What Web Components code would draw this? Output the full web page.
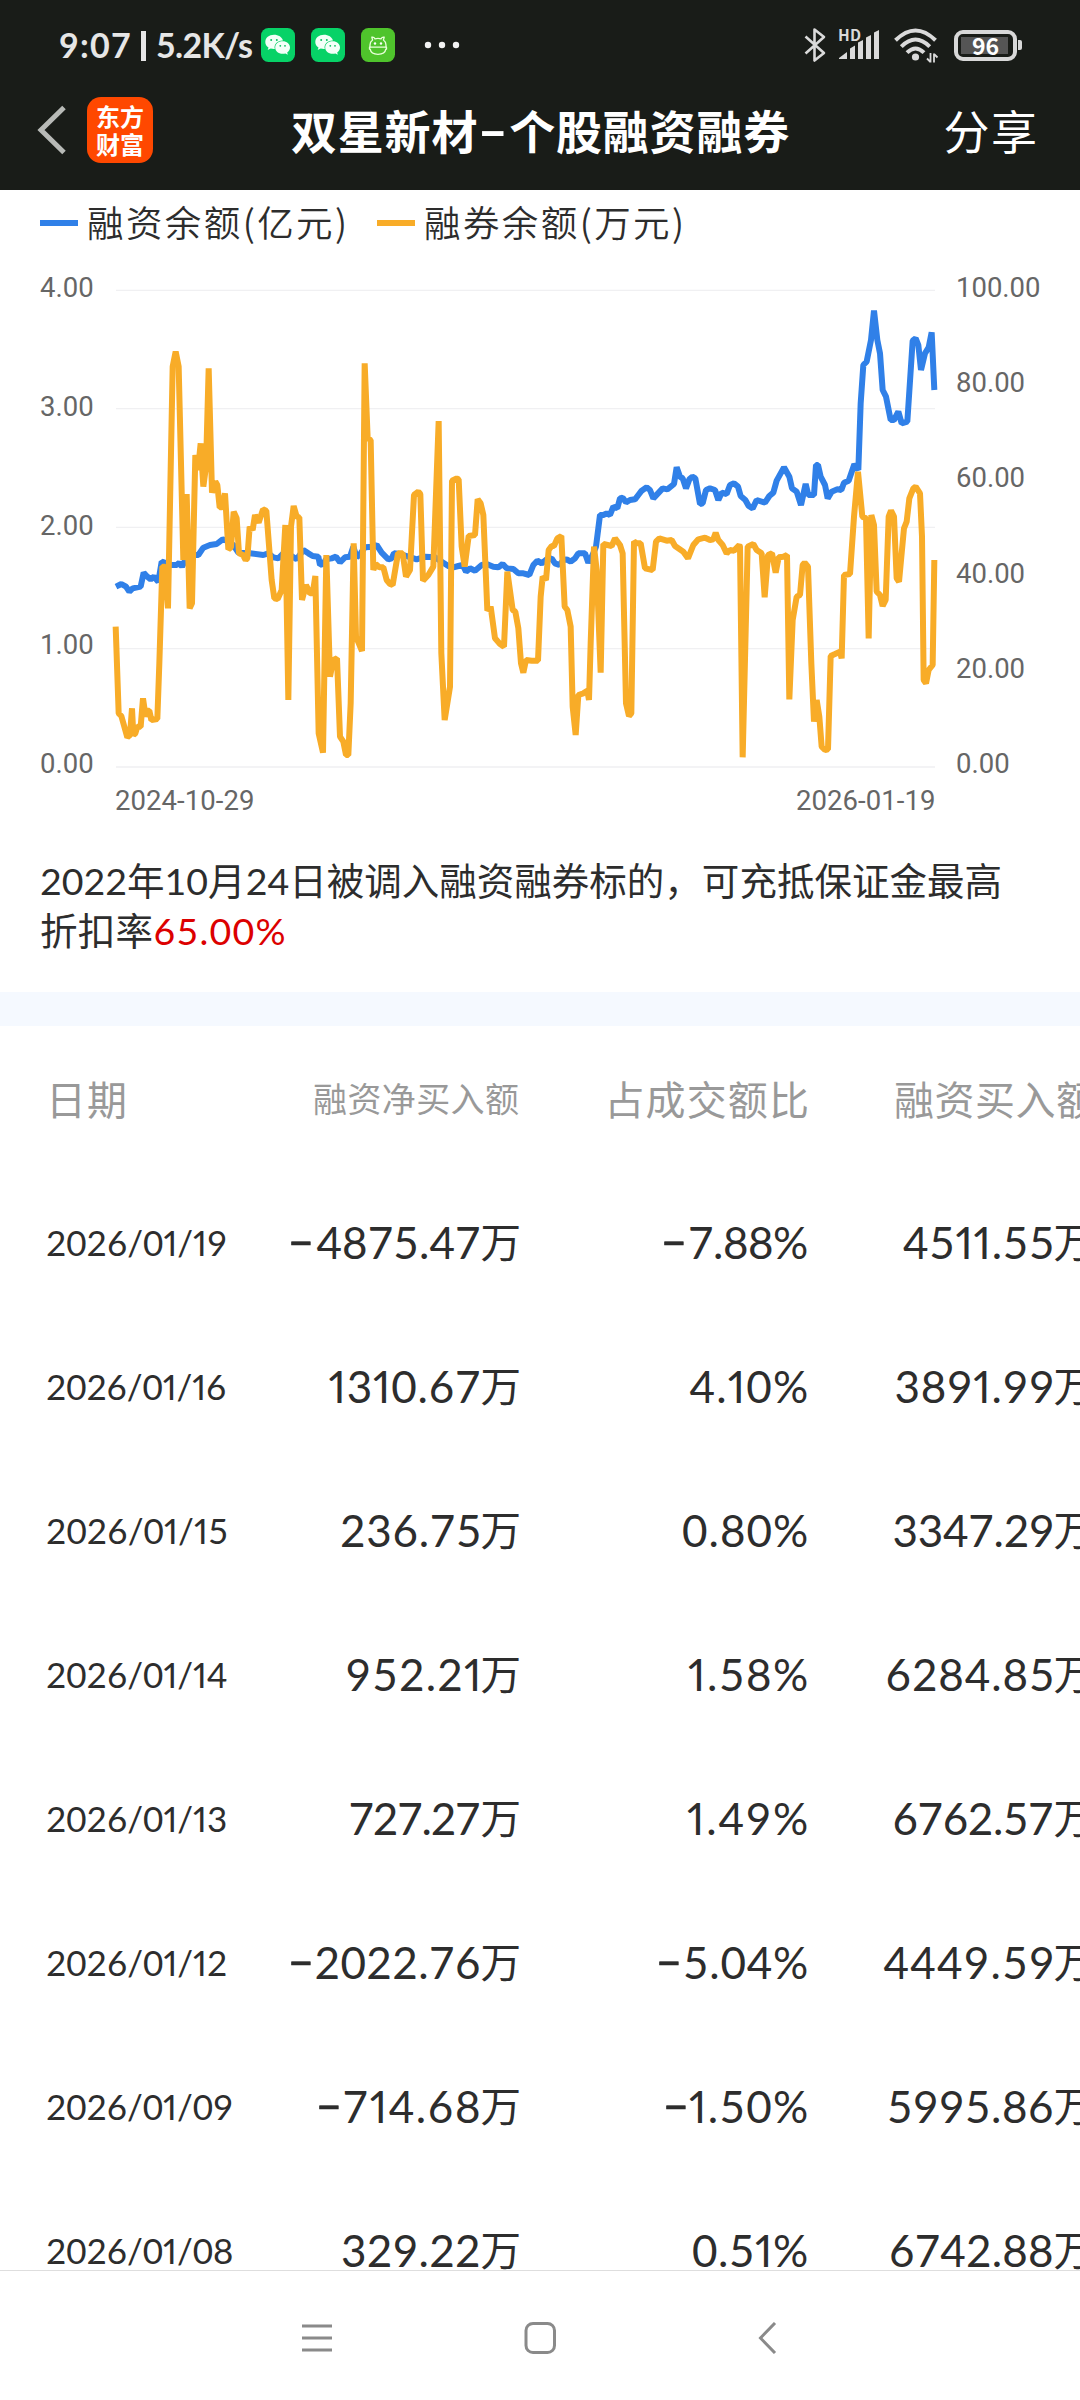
<!DOCTYPE html>
<html lang="zh-CN">
<head>
    <meta charset="UTF-8">
    <meta name="viewport" content="width=device-width, initial-scale=1.0">
    <title>双星新材-个股融资融券</title>
    <style>
        html, body{
            margin: 0;
            background: #fff;
        }
        body{
            font-family: Lato, "Noto Sans CJK SC", sans-serif;
            color: #2d2d2d;
            overflow: hidden;
        }
    </style>
</head>
<body>
    <margin-page></margin-page>

    <template id="tpl-page">
        <style>
            :host{
                display: flex;
                flex-direction: column;
                width: 1080px;
                height: 2400px;
                overflow: hidden;
            }
            header{
                height: 190px;
                background: #191c18;
                flex: none;
            }
            main{
                flex: 1;
                min-height: 0;
                overflow: hidden;
            }
            .band{
                height: 34px;
                background: #f5f9ff;
            }
        </style>
        <header>
            <status-bar></status-bar>
            <title-bar>双星新材<span class="dash">-</span>个股融资融券</title-bar>
        </header>
        <main>
            <margin-chart></margin-chart>
            <stock-note></stock-note>
            <div class="band"></div>
            <margin-table></margin-table>
        </main>
        <nav-bar></nav-bar>
    </template>

    <template id="tpl-status">
        <style>
            :host{
                display: flex;
                align-items: center;
                height: 90px;
                padding: 0 63px 0 60px;
                box-sizing: border-box;
                color: #e6e6e6;
                font-size: 34px;
                font-weight: 700;
                line-height: 40px;
            }
            svg{ display: block; flex: none; overflow: visible; }
            .bar{
                width: 5px;
                height: 30px;
                margin: 2px 11px 0 11px;
                background: #e6e6e6;
            }
            .app{ margin-left: 16px; }
            .app.first{ margin-left: 9px; }
            .dots{ margin-left: 29px; }
            .space{ flex: 1; }
            .battery{
                position: relative;
                display: flex;
                align-items: center;
                justify-content: center;
                width: 63px;
                height: 31px;
                box-sizing: border-box;
                border: 4px solid #d8d8d8;
                border-radius: 9px;
                margin-left: 16px;
                font: 700 23px/30px "Noto Sans CJK SC", sans-serif;
                color: #fff;
            }
            .battery i{
                position: absolute;
                left: 3px;
                top: 3px;
                width: 47px;
                height: 17px;
                background: #555;
            }
            .battery b{
                position: absolute;
                right: -9px;
                top: 6px;
                width: 4px;
                height: 10px;
                border-radius: 0 2px 2px 0;
                background: #d8d8d8;
            }
            .battery span{ position: relative; }
            .signal text{ font: 700 15.5px "Noto Sans CJK SC", sans-serif; }
        </style>
        <fit-text w="70">9:07</fit-text>
        <div class="bar"></div>
        <fit-text w="95">5.2K/s</fit-text>
        <wechat-icon class="app first"></wechat-icon>
        <wechat-icon class="app"></wechat-icon>
        <svg class="app" width="34" height="34" viewBox="0 0 34 34">
            <rect width="34" height="34" rx="7.5" fill="#4fc42c"/>
            <g fill="none" stroke="#e9ffd9" stroke-width="1.3" stroke-linecap="round" stroke-linejoin="round">
                <path d="M9 19V17Q9.2 13.600 11.600 12L10.800 9.200Q12.800 8.600 14 10.900 17 10 20 10.900 21.200 8.600 23.200 9.200L22.400 12Q24.800 13.600 25 17V19"/>
                <path d="M8.500 19.200H25.500V21.200H24.800C23.800 28 10.200 28 9.200 21.200H8.500Z"/>
            </g>
            <circle cx="14" cy="15.500" r="1.200" fill="#fff"/>
            <circle cx="20" cy="15.500" r="1.200" fill="#fff"/>
        </svg>
        <svg class="dots" width="36" height="8" viewBox="0 0 36 8" fill="#f2f2f2">
            <circle cx="4" cy="4" r="3.2"/><circle cx="18" cy="4" r="3.2"/><circle cx="32" cy="4" r="3.2"/>
        </svg>
        <div class="space"></div>
        <svg width="22" height="36" viewBox="0 0 22 36" fill="none" stroke="#dadada" stroke-width="2.6" stroke-linejoin="round">
            <path d="M1.5 9.5 20 26 10.5 33.5V2.5L20 10 1.5 26.5"/>
        </svg>
        <svg class="signal" style="margin-left:12px" width="43" height="34" viewBox="0 0 43 34" fill="#dadada">
            <text x="0" y="12.5" textLength="23">HD</text>
            <path d="M1 31V30L9 24V31ZM12 31V20.500L17 17.500V31ZM20 31V14.500L25 12V31ZM28 31V9.500L33 7V31ZM36 31V4.500L41 2V31Z"/>
        </svg>
        <svg style="margin-left:13px" width="44" height="36" viewBox="0 0 44 36" fill="none" stroke="#dadada" stroke-width="4">
            <path d="M1.500 13.300Q21.500-6.300 41.500 13.300"/>
            <path d="M7.300 19.700Q21.500 5.500 35.700 19.700"/>
            <path d="M13 25.700Q21.500 17.300 30 25.700"/>
            <circle cx="21.500" cy="30" r="3.600" fill="#dadada" stroke="none"/>
            <path d="M36.500 26V35.500M36.500 35 33 31.500M40 35.500V26.500M40 27 43.500 30.500" stroke-width="1.800"/>
        </svg>
        <div class="battery"><i></i><b></b><span>96</span></div>
    </template>

    <template id="tpl-wechat">
        <style>
            :host{ display: block; flex: none; }
            svg{ display: block; }
        </style>
        <svg width="34" height="34" viewBox="0 0 34 34">
            <rect width="34" height="34" rx="7.500" fill="#07d267"/>
            <path fill="#f3fff8" d="M13 6.800c-5 0-8.700 3.100-8.700 7.100 0 2.300 1.200 4.200 3.200 5.500l-.8 2.700 3-1.600c1 .3 2.100.5 3.300.5h.8c-1.300-4.700 3-8.700 8.200-8.500-.9-3.400-4.600-5.700-9-5.700z"/>
            <path fill="#f3fff8" d="M21.600 13.300c-4.300 0-7.400 2.700-7.400 6.200s3.100 6.300 7.400 6.300c1 0 1.900-.2 2.800-.4l2.400 1.300-.6-2.200c1.700-1.200 2.800-3 2.800-5 0-3.500-3.200-6.200-7.400-6.200z"/>
            <g fill="#07c160">
                <circle cx="10.200" cy="12" r="1"/><circle cx="15.800" cy="12" r="1"/>
                <circle cx="19.300" cy="17.800" r=".9"/><circle cx="24" cy="17.800" r=".9"/>
            </g>
        </svg>
    </template>

    <template id="tpl-title">
        <style>
            :host{
                display: flex;
                align-items: center;
                height: 80px;
                padding: 0 45px 0 37px;
                color: #fff;
                font-family: "Noto Sans CJK SC", sans-serif;
                font-size: 46px;
                line-height: 60px;
            }
            svg{ display: block; }
            .logo{
                display: flex;
                flex-direction: column;
                align-items: center;
                justify-content: center;
                width: 66px;
                height: 66px;
                margin-left: 21px;
                border-radius: 14px;
                background: #ff4800;
                font-size: 24px;
                font-weight: 700;
                line-height: 28px;
            }
            h1{
                margin: 0 0 3px 138px;
                font-size: 46px;
                font-weight: 700;
                white-space: nowrap;
                letter-spacing: .8px;
            }
            ::slotted(.dash){
                display: inline-block;
                width: 31px;
                text-align: center;
                transform: translateY(-2px) scaleX(1.7);
            }
            .share{ margin: 0 0 3px auto; }
        </style>
        <svg width="29" height="50" viewBox="0 0 29 50" fill="none" stroke="#b8bab7" stroke-width="5">
            <path d="M27 2.500 4 25 27 47.500"/>
        </svg>
        <div class="logo"><div>东方</div><div>财富</div></div>
        <h1><slot></slot></h1>
        <fit-text class="share" w="89.500">分享</fit-text>
    </template>

    <template id="tpl-chart">
        <style>
            :host{ display: block; }
            .legend{
                display: flex;
                align-items: center;
                height: 66px;
                padding: 0 0 14px 40px;
                font-family: "Noto Sans CJK SC", sans-serif;
                font-size: 36.500px;
                line-height: 50px;
            }
            .legend i{
                width: 38px;
                height: 6px;
                margin-right: 11px;
            }
            .legend fit-text{ margin: -1px 33px 0 0; font-weight: 350; }
            .body{
                display: grid;
                grid-template-columns: 75px 819px 1fr;
                height: 510px;
                padding-left: 41px;
            }
            .axis{
                display: flex;
                flex-direction: column;
                justify-content: space-between;
                padding-top: 2px;
            }
            .axis, .dates{
                font: 27.500px/32px Roboto, sans-serif;
                color: #666;
            }
            .left{ margin-left: -1px; }
            .right{ padding-left: 21px; }
            svg{ display: block; overflow: visible; }
            .dates{
                display: flex;
                justify-content: space-between;
                align-items: center;
                height: 40px;
                padding-top: 1px;
                margin: 0 146px -1px 116px;
            }
        </style>
        <div class="legend">
            <i style="background:#3080e8"></i><fit-text w="255">融资余额(亿元)</fit-text>
            <i style="background:#f8ac28"></i><fit-text w="255">融券余额(万元)</fit-text>
        </div>
        <div class="body">
            <div class="axis left"></div>
            <!-- 3 units per pixel -->
            <svg width="819" height="510" viewBox="78 0 2457 1530" fill="none">
                <path stroke="#f0f0f2" stroke-width="4" d="M78 61H2535M78 416H2535M78 772H2535M78 1136H2535M78 1491H2535"/>
                <polyline class="rz" stroke="#3080e8" stroke-width="18" stroke-linejoin="bevel"/>
                <polyline class="rq" stroke="#f8ac28" stroke-width="18" stroke-linejoin="bevel"/>
            </svg>
            <div class="axis right"></div>
        </div>
        <div class="dates"><fit-text w="137">2024-10-29</fit-text><fit-text w="137">2026-01-19</fit-text></div>
    </template>

    <template id="tpl-note">
        <style>
            :host{
                display: block;
                height: 136px;
                padding: 36px 0 0 41px;
                font-size: 37.500px;
                line-height: 50px;
            }
            div{ height: 50px; white-space: nowrap; }
            .rate{ color: #dc0000; margin-left: 4px; }
        </style>
        <div><fit-text w="959.500">2022年10月24日被调入融资融券标的，可充抵保证金最高</fit-text></div>
        <div><fit-text w="110.500">折扣率</fit-text><fit-text class="rate" w="129">65.00%</fit-text></div>
    </template>

    <template id="tpl-table">
        <style>
            :host{ display: block; }
            .row{
                display: grid;
                grid-template-columns: 180px 292px 288px 285px;
                height: 144px;
                padding-left: 47px;
                line-height: 144px;
                font-size: 44px;
                white-space: nowrap;
            }
            .row > div{ text-align: right; }
            .row > div:first-child{ text-align: left; font-size: 35px; }
            .head{
                color: #999;
                font-family: "Noto Sans CJK SC", sans-serif;
                font-size: 40px;
            }
            .head > div:first-child{ padding-left: 6px; font-size: 40px; }
            .head > div:nth-child(2){ font-size: 34px; }
            .head > div:last-child{ margin-right: -3px; }
            .minus{
                display: inline-block;
                width: 27px;
                line-height: 1;
                text-align: left;
            }
            .minus span{
                display: inline-block;
                transform-origin: 0 50%;
                transform: translate(-3px, -2px) scaleX(1.7);
                -webkit-text-stroke: .5px currentColor;
            }
            .unit{
                margin-left: 2.500px;
                font-size: 40.500px;
                transform: translateY(-1.5px);
            }
            /* only the 1 is narrower than the other digits */
            .one{ font-style: normal; font-feature-settings: "pnum"; }
        </style>
        <div class="row head">
            <div><fit-text w="72">日期</fit-text></div>
            <div><fit-text w="205">融资净买入额</fit-text></div>
            <div><fit-text w="196.500">占成交额比</fit-text></div>
            <div><fit-text w="199">融资买入额</fit-text></div>
        </div>
    </template>

    <template id="tpl-nav">
        <style>
            :host{
                display: block;
                flex: none;
                height: 130px;
                box-sizing: border-box;
                border-top: 1px solid #dedede;
                background: #fff;
            }
            div{
                display: flex;
                align-items: center;
                height: 134px;
                padding-left: 301px;
            }
            svg{ display: block; fill: none; stroke: #8a8a8a; stroke-width: 3; }
        </style>
        <div>
            <svg width="32" height="32" viewBox="0 0 32 32"><path d="M1 4H31M1 16H31M1 28H31"/></svg>
            <svg style="margin-left:191px" width="32" height="32" viewBox="0 0 32 32"><rect x="2" y="1.500" width="28.500" height="29" rx="7"/></svg>
            <svg style="margin-left:201px" width="20" height="32" viewBox="0 0 20 32"><path d="M18 1 3.500 16 18 31"/></svg>
        </div>
    </template>

    <script>
        class TemplateElement extends HTMLElement{
            constructor(id){
                super();
                this.attachShadow({ mode: "open" });
                this.shadowRoot.append(document.getElementById(id).content.cloneNode(true));
            }
        }

        // Spreads its text over exactly w pixels by changing the letter spacing
        class FitText extends HTMLElement{
            constructor(){
                super();
                this.attachShadow({ mode: "open" });
                this.shadowRoot.innerHTML = `
                    <style>
                        :host{ display: inline-block; line-height: 1; white-space: nowrap; text-align: left; flex: none; }
                        span{ display: inline-block; }
                    </style>
                    <span><slot></slot></span>`;
            }
            connectedCallback(){
                const w = parseFloat(this.getAttribute("w"));
                const text = this.textContent;
                const cs = getComputedStyle(this);
                const ctx = document.createElement("canvas").getContext("2d");
                ctx.font = `${cs.fontWeight} ${cs.fontSize} ${cs.fontFamily}`;
                const m = ctx.measureText(text);
                const span = this.shadowRoot.querySelector("span");
                // side bearings come from the canvas, the advance from the laid out text
                const bearings = m.width - m.actualBoundingBoxLeft - m.actualBoundingBoxRight;
                const ink = span.getBoundingClientRect().width - bearings;
                if (text.length > 1) {
                    span.style.letterSpacing = (w - ink) / (text.length - 1) + "px";
                }
                span.style.marginLeft = m.actualBoundingBoxLeft + "px";
                this.style.width = w + "px";
            }
        }

        class StatusBar extends TemplateElement{
            constructor(){ super("tpl-status"); }
        }
        class WechatIcon extends TemplateElement{
            constructor(){ super("tpl-wechat"); }
        }
        class TitleBar extends TemplateElement{
            constructor(){ super("tpl-title"); }
        }
        class StockNote extends TemplateElement{
            constructor(){ super("tpl-note"); }
        }
        class NavBar extends TemplateElement{
            constructor(){ super("tpl-nav"); }
        }
        class MarginPage extends TemplateElement{
            constructor(){ super("tpl-page"); }
        }

        // each part has its own x offset
        const rz = [
            [0, "78,950 94,942 108,950 118,965 128,955 152,950 161,908 172,920 182,928 192,920 205,935 215,875 230,880 245,885 260,885 268,878 276,890 285,872 305,855 325,855 340,833 360,825 380,822 398,808 410,812 430,825 445,848 480,850 520,855 535,850 550,862 565,865 580,850 600,855 620,868 640,840 655,850 668,858 685,860 690,885 700,882 708,868 725,865 738,860 750,877 765,862 780,860 790,830 800,862 812,850 825,832 850,830"],
            [840, "20,825 35,848 55,868 65,865 72,850 90,852 115,860 140,868 165,860 195,862 215,875 235,888 250,892 265,888 278,885 288,905 300,895 315,902 335,885 350,882 370,890 385,892 398,882 410,895 430,897 445,910 460,910 478,915 490,885 502,872 515,880 530,868 545,865 555,880 568,885 580,870 590,868 602,875 615,865 625,850 645,850 655,878 665,860 672,845 678,830 690,735 700,735 710,730 720,735 730,710 742,715 750,685 758,683 768,697 780,690 795,688 805,675 815,662 830,652 840,660"],
            [1680, "10,685 38,655 52,658 72,642 80,592 90,620 98,625 108,655 118,628 127,620 136,625 150,702 158,700 168,660 180,655 195,660 205,690 215,668 230,672 240,645 252,640 264,650 272,678 286,690 296,708 308,715 320,690 345,698 358,678 370,668 380,632 402,592 418,620 426,655 440,665 453,705 467,642 475,675 492,675 498,585 504,585 512,620 525,645 533,685 545,665 562,658 574,660 582,638 596,632 613,583 625,600 632,400 640,285 650,275 663,210 672,122 682,210 690,250 698,360 708,380 722,450 732,450 745,425 755,460 772,455 788,212 797,205 805,225 813,300 825,250 836,232 845,187 853,360"]
        ];
        const rq = [
            [0, "77,1070 86,1330 94,1338 112,1402 120,1395 126,1315 130,1395 136,1390 142,1370 152,1370 159,1285 167,1340 172,1322 178,1322 184,1350 202,1347 208,1180 217,890 225,890 234,1015 248,290 257,245 266,290 280,870 290,672 299,1015 306,1000 316,555 324,600 332,520 340,650 348,590 356,295 366,668 376,635 382,645 389,712 397,712 405,670 415,838 423,832 431,725 440,745 447,850 459,855 467,870 472,865 479,770 488,780 495,735 506,758 519,718 529,722 535,800 545,930 553,985 563,987 575,960 586,765 595,1290 603,770 611,708 620,740 628,742 636,990 648,945 660,970 668,970 676,918 686,1390 699,1448 709,855 720,1220 730,1170 741,1165 750,1400 760,1415 768,1455 775,1455 782,1300 791,820 798,1100 816,1143 824,280 833,505 842,510"],
            [840, "10,900 17,882 28,892 40,892 50,930 60,942 68,945 84,850 98,850 108,920 120,900 132,675 145,665 151,672 159,932 175,915 190,890 206,453 214,1150 224,1350 240,1250 246,632 260,625 266,628 275,830 284,890 296,798 315,795 323,688 332,700 340,735 352,1022 362,1010 375,1105 390,1122 402,1130 412,905 428,1020 436,1025 445,1075 453,1180 460,1208 468,1170 485,1172 504,1172 512,980 518,920 528,930 536,840 545,828 552,828 562,805 574,798 584,1010 592,1020 602,1070 608,1310 617,1395 625,1275 640,1270 652,1262 657,1290 662,1120 672,830 680,900 692,1208 700,822 725,828 735,805 750,825 758,850 768,1300 777,1338 784,1330 792,815 800,820 812,820 825,895"],
            [1680, "8,900 18,815 28,805 50,812 65,810 75,828 100,845 114,865 130,825 145,808 165,803 180,810 190,808 197,788 205,810 218,825 230,850 240,840 252,842 268,825 270,830 278,1462 293,830 310,822 320,840 335,850 344,982 354,855 366,850 377,908 386,862 400,860 411,855 418,1288 428,1050 440,980 450,975 458,885 464,878 474,890 484,1180 492,1355 500,1290 508,1340 515,1430 525,1440 534,1438 542,1158 555,1152 570,1145 575,1165 582,915 600,912 612,740 624,605 637,740 648,745 656,1105 664,735 672,765 680,965 690,975 698,1008 707,990 716,740 723,722 732,740 740,925 747,935 762,775 770,755 778,685 790,655 797,650 810,670 816,800 821,1230 828,1240 836,1200 848,1185 853,870"]
        ];

        class MarginChart extends TemplateElement{
            constructor(){
                super("tpl-chart");
                const root = this.shadowRoot;
                root.querySelector(".left").innerHTML = ["4.00", "3.00", "2.00", "1.00", "0.00"].map(t => `<div>${t}</div>`).join("");
                root.querySelector(".right").innerHTML = ["100.00", "80.00", "60.00", "40.00", "20.00", "0.00"].map(t => `<div>${t}</div>`).join("");
                root.querySelector(".rz").setAttribute("points", this.join(rz));
                root.querySelector(".rq").setAttribute("points", this.join(rq));
            }
            join(parts){
                return parts.map(([dx, pts]) => pts.split(" ").map(p => {
                    const [x, y] = p.split(",");
                    return (+x + dx) + "," + y;
                }).join(" ")).join(" ");
            }
        }

        // value and the width of its digits
        const rows = [
            ["2026/01/19", 179, "-4875.47", 162.5, "-7.88%", 117, "4511.55", 149],
            ["2026/01/16", 178, "1310.67", 147.5, "4.10%", 117.5, "3891.99", 156.5],
            ["2026/01/15", 179, "236.75", 137, "0.80%", 124, "3347.29", 158.5],
            ["2026/01/14", 180, "952.21", 131.5, "1.58%", 116, "6284.85", 164.5],
            ["2026/01/13", 179, "727.27", 128.5, "1.49%", 117, "6762.57", 157.5],
            ["2026/01/12", 179, "-2022.76", 162.5, "-5.04%", 122, "4449.59", 168.5],
            ["2026/01/09", 185, "-714.68", 134.5, "-1.50%", 115, "5995.86", 163],
            ["2026/01/08", 185, "329.22", 137, "0.51%", 114, "6742.88", 161]
        ];

        class MarginTable extends TemplateElement{
            constructor(){
                super("tpl-table");
                const unit = '<fit-text class="unit" w="37.5">万</fit-text>';
                for (const r of rows) {
                    const row = document.createElement("div");
                    row.className = "row";
                    row.innerHTML = `<div>${this.number(r[0], r[1])}</div>`
                        + `<div>${this.number(r[2], r[3])}${unit}</div>`
                        + `<div>${this.number(r[4], r[5])}</div>`
                        + `<div>${this.number(r[6], r[7])}${unit}</div>`;
                    this.shadowRoot.append(row);
                }
            }
            number(text, w){
                const minus = text[0] === "-" ? '<span class="minus"><span>-</span></span>' : "";
                const digits = text.replace("-", "").replace(/1/g, '<i class="one">1</i>');
                return `${minus}<fit-text w="${w}">${digits}</fit-text>`;
            }
        }

        customElements.define("margin-page", MarginPage);
        customElements.define("status-bar", StatusBar);
        customElements.define("wechat-icon", WechatIcon);
        customElements.define("title-bar", TitleBar);
        customElements.define("margin-chart", MarginChart);
        customElements.define("stock-note", StockNote);
        customElements.define("margin-table", MarginTable);
        customElements.define("nav-bar", NavBar);
        customElements.define("fit-text", FitText);
    </script>
</body>
</html>
